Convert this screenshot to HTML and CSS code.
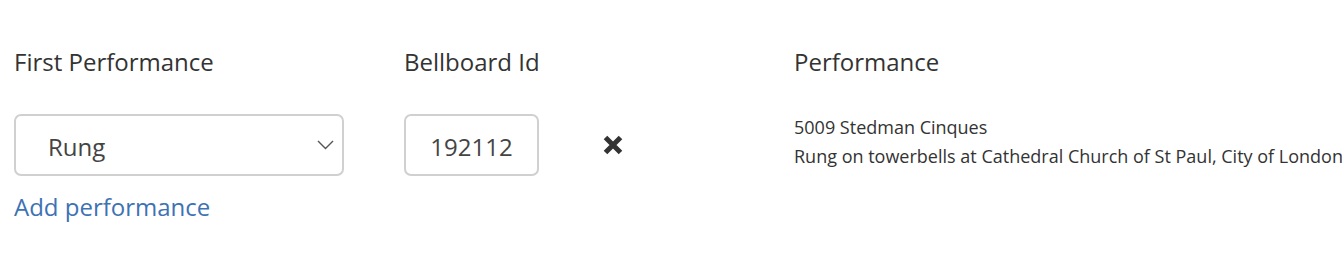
FILE: index.html
```html
<!DOCTYPE html>
<html>
<head>
<meta charset="utf-8">
<link rel="stylesheet" href="styles.css">
</head>
<body>
<div class="form">
  <div class="col col-first">
    <div class="label">First Performance</div>
    <div class="select">
      <span class="select-text">Rung</span>
      <svg class="chev" width="17" height="10" viewBox="0 0 17 10"><path d="M1 1 L8.5 8.5 L16 1" fill="none" stroke="#555" stroke-width="1.4"/></svg>
    </div>
    <a class="add" href="#">Add performance</a>
  </div>
  <div class="col col-id">
    <div class="label">Bellboard Id</div>
    <div class="input">192112</div>
  </div>
  <div class="col col-x">
    <div class="label">&nbsp;</div>
    <div class="xwrap">
      <svg width="20" height="20" viewBox="0 0 20 20"><path d="M2.5 2.5 L17.5 17.5 M17.5 2.5 L2.5 17.5" stroke="#333" stroke-width="5" stroke-linecap="butt"/></svg>
    </div>
  </div>
  <div class="col col-perf">
    <div class="label">Performance</div>
    <div class="perf">
      <div>5009 Stedman Cinques</div>
      <div>Rung on towerbells at Cathedral Church of St Paul, City of London</div>
    </div>
  </div>
</div>
</body>
</html>
```

FILE: styles.css
```css
html, body {
  margin: 0;
  padding: 0;
  background: #fff;
}
body {
  font-family: "Open Sans", "Liberation Sans", sans-serif;
  color: #333;
  overflow: hidden;
}
.form {
  display: flex;
  padding: 43px 0 0 14px;
  white-space: nowrap;
}
.col {
  display: flex;
  flex-direction: column;
}
.label {
  font-size: 24px;
  line-height: 38px;
  height: 38px;
  color: #333;
  margin-bottom: 33px;
}
.col-first { width: 390px; }
.select {
  box-sizing: border-box;
  width: 330px;
  height: 62px;
  border: 2px solid #d0d0d0;
  border-radius: 7px;
  display: flex;
  align-items: center;
  justify-content: space-between;
  padding: 0 8px 0 32px;
  font-size: 24px;
  color: #444;
}
.select-text { line-height: 1; margin-top: 3px; }
.chev { margin-top: 0; }
.add {
  margin-top: 14px;
  font-size: 24px;
  color: #3d72b4;
  text-decoration: none;
  line-height: 34px;
}
.col-id { width: 199px; }
.input {
  box-sizing: border-box;
  width: 135px;
  height: 62px;
  border: 2px solid #d0d0d0;
  border-radius: 7px;
  display: flex;
  align-items: center;
  justify-content: center;
  padding-top: 3px;
  font-size: 24px;
  color: #444;
}
.col-x { width: 191px; }
.xwrap {
  height: 62px;
  display: flex;
  align-items: center;
}
.perf {
  font-size: 18px;
  line-height: 29px;
  margin-top: -1px;
  color: #333;
}
```
